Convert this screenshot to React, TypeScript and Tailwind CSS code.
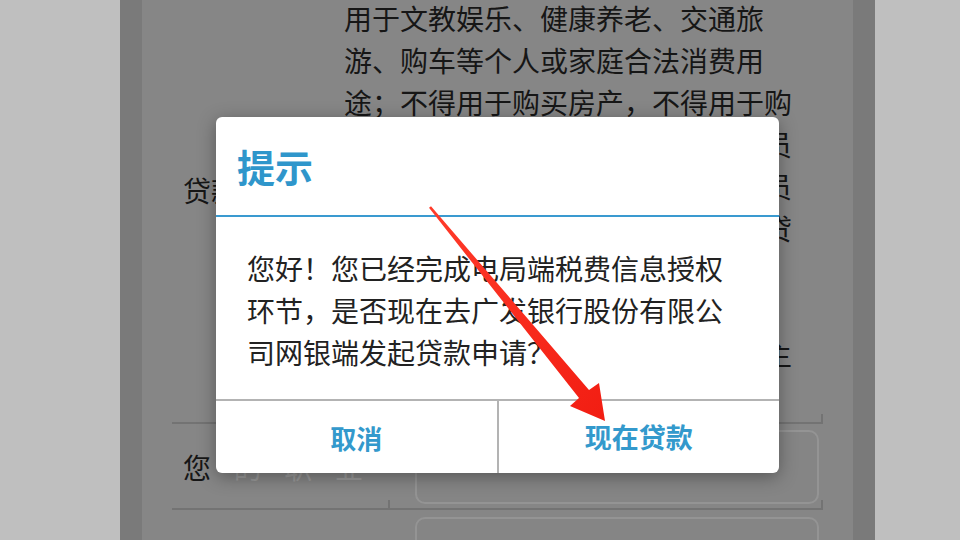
import React from "react";

const FONT = "font-['Noto_Sans_CJK_SC','Noto_Sans',sans-serif]";

// 背景里被弹窗挡住的说明文字，按原图手动断行
const PURPOSE_LINES = [
  "用于文教娱乐、健康养老、交通旅",
  "游、购车等个人或家庭合法消费用",
  "途；不得用于购买房产，不得用于购",
  "买理财产品、股票、期货等投资品员",
  "种，不得用于生产经营及其他非消员",
  "费用途，否则银行有权将提前收回贷",
  "款并追究相关责任。请如实填写",
  "本人的真实贷款用途，以便银行",
  "审核，最终审核结果以银行通知为主",
  "准。",
];

function Divider() {
  return <div className="ml-[30px] h-[10px] w-[651px] shrink-0 border-b-2 border-r-2 border-[#737373]" />;
}

function FieldRow({ label, height }: { label: string; height: string }) {
  return (
    <div className={`flex shrink-0 items-start ${height}`}>
      <div className="ml-[41px] mt-[22px] flex w-[180px] justify-between text-[28px] leading-[42px] text-[#161616]">
        {label.split("").map((c, i) => (
          <span key={i} className={i > 0 ? "text-[#9a9a9a]" : ""}>
            {c}
          </span>
        ))}
      </div>
      <div className="ml-[52px] mt-[6px] h-[74px] w-[404px] rounded-[10px] border-2 border-[#949494] bg-[#858585]" />
    </div>
  );
}

function Arrow() {
  return (
    <svg className="pointer-events-none absolute left-0 top-0" width="960" height="540" viewBox="0 0 960 540">
      <defs>
        <linearGradient id="ar" x1="0" y1="0" x2="1" y2="1">
          <stop offset="0" stopColor="#ff3b2a" />
          <stop offset="1" stopColor="#f21d12" />
        </linearGradient>
      </defs>
      <polygon
        points="431,206.2 589,390 599,383 605,421 570,406 579,398 429,207.8"
        fill="url(#ar)"
      />
    </svg>
  );
}

export default function App() {
  return (
    <div className={`relative flex h-[540px] w-[960px] overflow-hidden bg-[#bfbfbf] ${FONT}`}>
      <div className="w-[120px] shrink-0" />

      {/* 手机画面（被遮罩压暗） */}
      <div className="flex h-full w-[755px] shrink-0 flex-col overflow-hidden border-x-[22px] border-[#7a7a7a] bg-[#868686]">
        <div className="flex h-[414px] shrink-0 overflow-hidden">
          <div className="ml-[41px] mt-[169px] w-[161px] shrink-0 text-[28px] leading-[42px] text-[#161616]">
            贷款用途
          </div>
          <div className="-mt-[3px] flex flex-col text-[28px] leading-[42px] text-[#161616]">
            {PURPOSE_LINES.map((l, i) => (
              <div key={i} className="whitespace-nowrap">
                {l}
              </div>
            ))}
          </div>
        </div>
        <Divider />
        <FieldRow label="您的职业" height="h-[76px]" />
        <div className="flex shrink-0">
          <div className="ml-[30px] h-[10px] w-[218px] border-b-2 border-r-2 border-[#737373]" />
          <div className="h-[10px] w-[433px] border-b-2 border-r-2 border-[#737373]" />
        </div>
        <div className="flex shrink-0 items-start">
          <div className="ml-[41px] mt-[22px] flex w-[180px] justify-between text-[28px] leading-[42px] text-[#161616]">
            <span>您</span>
            <span>的</span>
            <span>单</span>
            <span>位</span>
          </div>
          <div className="ml-[52px] mt-[7px] h-[74px] w-[404px] rounded-[10px] border-2 border-[#949494] bg-[#858585]" />
        </div>
      </div>

      <div className="flex-1" />

      {/* 提示弹窗 */}
      <div className="absolute left-[216px] top-[117px] flex h-[356px] w-[563px] flex-col overflow-hidden rounded-[6px] bg-white shadow-[0_4px_18px_rgba(0,0,0,0.35)]">
        <div className="flex h-[98px] shrink-0 items-center pl-[21px]">
          <span className="text-[38px] font-bold leading-none text-[#2f96cb]">提示</span>
        </div>
        <div className="h-[2px] shrink-0 bg-[#3a9ad0]" />
        <div className="flex-1 pl-[31px] pt-[30px] text-[28px] leading-[42px] text-[#222222]">
          <div className="whitespace-nowrap">您好！您已经完成电局端税费信息授权</div>
          <div className="whitespace-nowrap">环节，是否现在去广发银行股份有限公</div>
          <div className="whitespace-nowrap">司网银端发起贷款申请？</div>
        </div>
        <div className="h-[2px] shrink-0 bg-[#b3b3b3]" />
        <div className="flex h-[72px] shrink-0">
          <button type="button" className="flex flex-1 items-center justify-center text-[26px] font-bold text-[#3399cc]">
            取消
          </button>
          <div className="w-[2px] bg-[#b3b3b3]" />
          <button type="button" className="flex flex-1 items-center justify-center text-[27px] font-bold text-[#3399cc]">
            现在贷款
          </button>
        </div>
      </div>

      <Arrow />
    </div>
  );
}
